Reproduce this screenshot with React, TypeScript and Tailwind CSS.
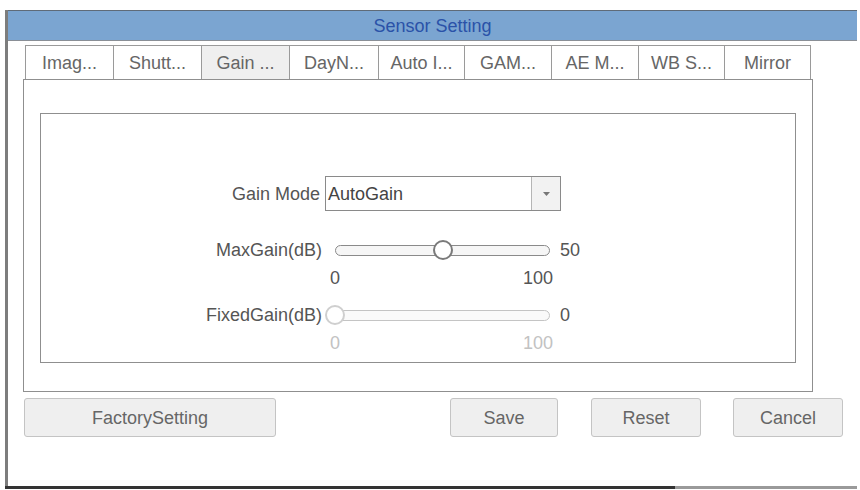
import React from 'react';

const tabs = [
  { label: 'Imag...', w: 'w-[89px]' },
  { label: 'Shutt...', w: 'w-[89px]' },
  { label: 'Gain ...', w: 'w-[89px]', active: true },
  { label: 'DayN...', w: 'w-[90px]' },
  { label: 'Auto I...', w: 'w-[87px]' },
  { label: 'GAM...', w: 'w-[88px]' },
  { label: 'AE M...', w: 'w-[88px]' },
  { label: 'WB S...', w: 'w-[87px]' },
  { label: 'Mirror', w: 'w-[87px]' },
];

function Slider({ label, value, disabled }: { label: string; value: number; disabled?: boolean }) {
  return (
    <div className="flex items-center h-[24px]">
      <div className="w-[281px] text-right text-[#555]">{label}</div>
      <div
        className={`relative ml-[13px] w-[215px] h-[11px] rounded-full border ${
          disabled ? 'border-[#c4c4c4] bg-[#fafafa]' : 'border-[#8a8a8a] bg-[#f6f6f6]'
        }`}
      >
        {disabled ? (
          <div className="absolute left-[-11px] top-[-6px] w-[20px] h-[20px] rounded-full border-2 border-[#cfcfcf] bg-white" />
        ) : (
          <div className="absolute left-[97px] top-[-6px] w-[20px] h-[20px] rounded-full border-2 border-[#7a7a7a] bg-white" />
        )}
      </div>
      <div className="ml-[10px] text-[#555]">{value}</div>
    </div>
  );
}

function Range({ disabled }: { disabled?: boolean }) {
  return (
    <div className={`flex items-center h-[20px] pl-[289px] ${disabled ? 'text-[#c2c2c2]' : 'text-[#555]'}`}>
      <div className="w-[223px] flex justify-between">
        <span>0</span>
        <span>100</span>
      </div>
    </div>
  );
}

export default function App() {
  return (
    <div className="w-[860px] h-[490px] bg-white pt-[10px] pl-[5px] font-['Liberation_Sans',Arial,sans-serif] text-[18px] leading-none overflow-hidden">
      <div className="w-[852px] h-[479px] flex flex-col">
        <div className="flex-1 flex flex-col border-l-[3px] border-[#7d7d7d]">
          {/* title bar */}
          <div className="h-[31px] flex items-center justify-center bg-[#7ba5d1] border-t border-b border-t-[#5f6b78] border-b-[#8a8f96] text-[#2a52a8]">
            Sensor Setting
          </div>

          {/* tabs */}
          <div className="flex mt-[4px] ml-[17px] h-[34px]">
            {tabs.map((t, i) => (
              <div
                key={t.label}
                className={`${t.w} ${i > 0 ? '-ml-px' : ''} flex items-center justify-center border border-b-0 border-[#9a9a9a] text-[#666] ${
                  t.active ? 'bg-[#efefef]' : 'bg-white'
                }`}
              >
                {t.label}
              </div>
            ))}
          </div>

          {/* panel */}
          <div className="ml-[15px] w-[790px] h-[313px] border border-[#8f8f8f] pt-[33px] pl-[16px]">
            <div className="w-[756px] h-[250px] border border-[#8f8f8f]">
              <div className="flex items-center mt-[62px]">
                <div className="w-[279px] text-right text-[#555]">Gain Mode</div>
                <div className="ml-[5px] w-[236px] h-[35px] flex border border-[#8a8a8a] bg-white">
                  <div className="flex-1 flex items-center pl-[2px] text-[#444]">AutoGain</div>
                  <div className="w-[29px] flex items-center justify-center border-l border-[#b5b5b5] bg-[#f2f2f2]">
                    <svg width="9" height="6" viewBox="0 0 9 6">
                      <path d="M1 1h7L4.5 5z" fill="#777" />
                    </svg>
                  </div>
                </div>
              </div>

              <div className="mt-[27px]">
                <Slider label="MaxGain(dB)" value={50} />
              </div>
              <div className="mt-[6px]">
                <Range />
              </div>
              <div className="mt-[15px]">
                <Slider label="FixedGain(dB)" value={0} disabled />
              </div>
              <div className="mt-[6px]">
                <Range disabled />
              </div>
            </div>
          </div>

          {/* buttons */}
          <div className="flex mt-[6px] ml-[16px] h-[39px] text-[#666]">
            <button className="w-[252px] rounded-[3px] border border-[#c4c4c4] bg-[#efefef]">FactorySetting</button>
            <button className="ml-[174px] w-[108px] rounded-[3px] border border-[#c4c4c4] bg-[#efefef]">Save</button>
            <button className="ml-[33px] w-[110px] rounded-[3px] border border-[#c4c4c4] bg-[#efefef]">Reset</button>
            <button className="ml-[32px] w-[110px] rounded-[3px] border border-[#c4c4c4] bg-[#efefef]">Cancel</button>
          </div>
        </div>

        {/* bottom edge */}
        <div className="flex h-[3px]">
          <div className="w-[670px] bg-[#333]" />
          <div className="flex-1 bg-[#9a9a9a]" />
        </div>
      </div>
    </div>
  );
}
